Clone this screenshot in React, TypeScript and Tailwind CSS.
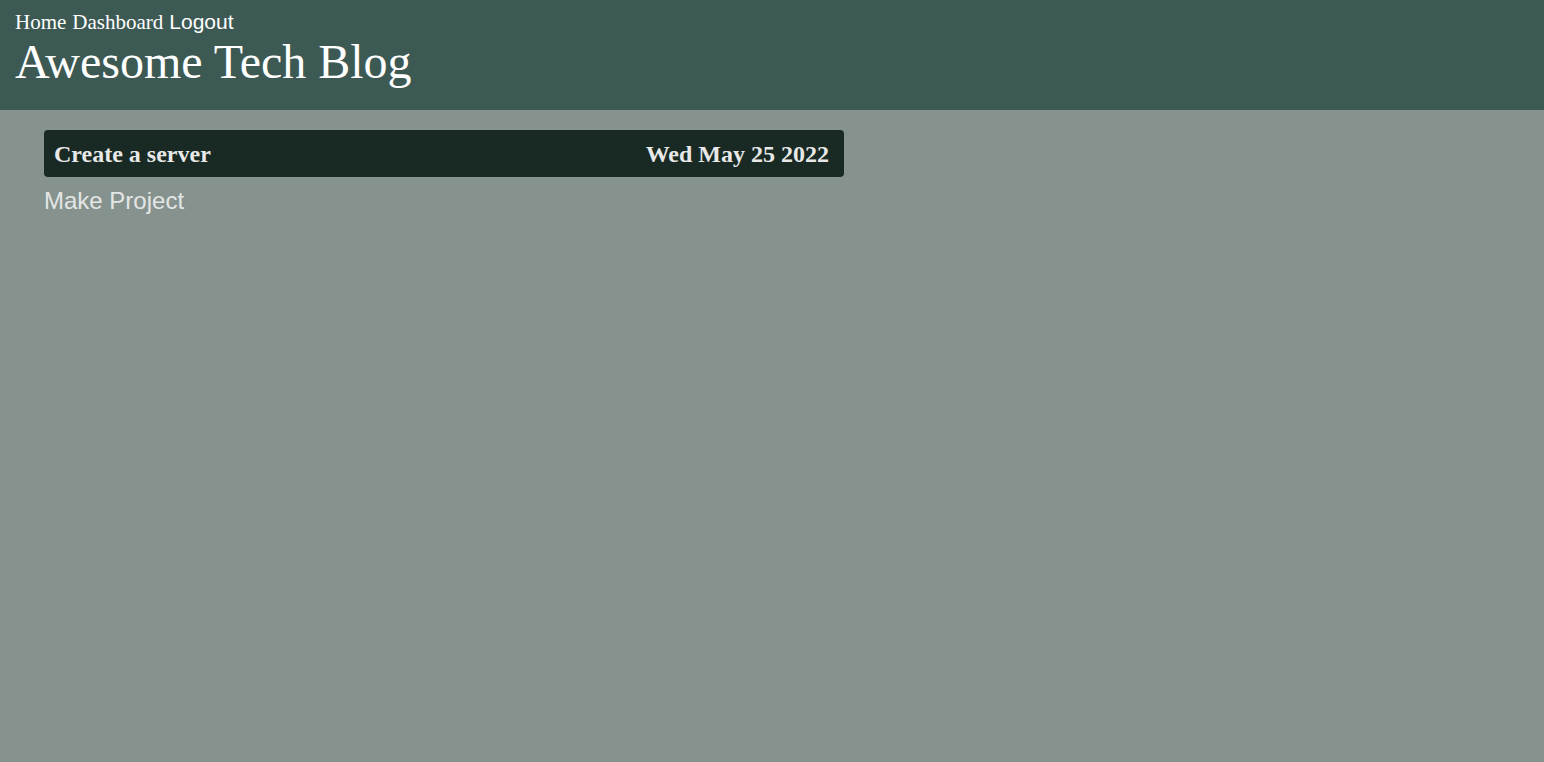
export default function App() {
  return (
    <div className="min-h-[762px] bg-[#86928e]">
      <header className="h-[110px] bg-[#3d5954] px-[15px] pt-[10px] text-white">
        <nav className="flex items-baseline gap-[6px] text-[21px] leading-[24px]">
          <a className="font-['Liberation_Serif',serif]">Home</a>
          <a className="font-['Liberation_Serif',serif]">Dashboard</a>
          <a className="font-['Liberation_Sans',sans-serif]">Logout</a>
        </nav>
        <h1 className="mt-[0px] font-['Liberation_Serif',serif] text-[48px] leading-[56px]">Awesome Tech Blog</h1>
      </header>
      <main className="px-[44px] pt-[20px]">
        <div className="flex h-[47px] w-[800px] items-center justify-between rounded-[4px] bg-[#182a23] pl-[10px] pr-[15px] font-['Liberation_Serif',serif] text-[24px] font-bold text-[#e8e8e8]">
          <span>Create a server</span>
          <span>Wed May 25 2022</span>
        </div>
        <p className="mt-[9px] font-['Liberation_Sans',sans-serif] text-[24px] leading-[30px] text-[#e4e6e5]">Make Project</p>
      </main>
    </div>
  );
}
